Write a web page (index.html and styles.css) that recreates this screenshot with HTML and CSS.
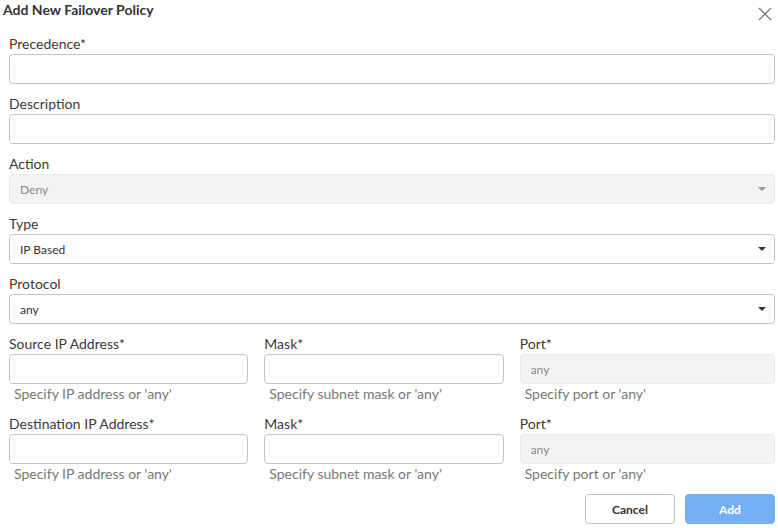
FILE: index.html
```html
<!DOCTYPE html>
<html>
<head>
<meta charset="utf-8">
<link rel="stylesheet" href="styles.css">
</head>
<body>
<div class="modal">
  <div class="header">
    <div class="title">Add New Failover Policy</div>
    <svg class="close" width="14" height="14" viewBox="0 0 14 14"><path d="M1 1L13 13M13 1L1 13" stroke="#7a7a7a" stroke-width="1.3" fill="none"/></svg>
  </div>
  <div class="body">
    <div class="field">
      <div class="label">Precedence*</div>
      <div class="input"></div>
    </div>
    <div class="field">
      <div class="label">Description</div>
      <div class="input"></div>
    </div>
    <div class="field">
      <div class="label">Action</div>
      <div class="input select disabled"><span>Deny</span><span class="caret"></span></div>
    </div>
    <div class="field">
      <div class="label">Type</div>
      <div class="input select"><span>IP Based</span><span class="caret"></span></div>
    </div>
    <div class="field">
      <div class="label">Protocol</div>
      <div class="input select"><span>any</span><span class="caret"></span></div>
    </div>
    <div class="row">
      <div class="col">
        <div class="label">Source IP Address*</div>
        <div class="input"></div>
        <div class="help">Specify IP address or 'any'</div>
      </div>
      <div class="col">
        <div class="label">Mask*</div>
        <div class="input"></div>
        <div class="help">Specify subnet mask or 'any'</div>
      </div>
      <div class="col">
        <div class="label">Port*</div>
        <div class="input disabled"><span>any</span></div>
        <div class="help">Specify port or 'any'</div>
      </div>
    </div>
    <div class="row">
      <div class="col">
        <div class="label">Destination IP Address*</div>
        <div class="input"></div>
        <div class="help">Specify IP address or 'any'</div>
      </div>
      <div class="col">
        <div class="label">Mask*</div>
        <div class="input"></div>
        <div class="help">Specify subnet mask or 'any'</div>
      </div>
      <div class="col">
        <div class="label">Port*</div>
        <div class="input disabled"><span>any</span></div>
        <div class="help">Specify port or 'any'</div>
      </div>
    </div>
    <div class="footer">
      <button class="btn cancel">Cancel</button>
      <button class="btn add">Add</button>
    </div>
  </div>
</div>
</body>
</html>
```

FILE: styles.css
```css
html, body {
  margin: 0;
  padding: 0;
  background: #fff;
}
body {
  font-family: Lato, "Liberation Sans", sans-serif;
  color: #333;
  width: 778px;
  height: 528px;
  overflow: hidden;
}
.header {
  height: 34px;
  display: flex;
  justify-content: space-between;
  align-items: flex-start;
  padding: 0 6px 0 3px;
}
.title {
  font-weight: bold;
  font-size: 14px;
  line-height: 19px;
  color: #333;
}
.close {
  margin-top: 7px;
}
.body {
  padding: 0 3px 0 9px;
}
.field {
  margin-bottom: 10px;
}
.label {
  font-size: 14px;
  line-height: 19px;
  height: 20px;
  color: #3a3a3a;
}
.input {
  box-sizing: border-box;
  height: 30px;
  border: 1px solid #c4c4c4;
  border-radius: 4px;
  background: #fff;
  display: flex;
  align-items: center;
  padding: 0 10px;
  font-size: 12px;
  color: #333;
}
.input.disabled {
  background: #f2f3f4;
  border-color: #e8e9ea;
  color: #8a8a8a;
}
.select {
  justify-content: space-between;
}
.caret {
  width: 0;
  height: 0;
  border-left: 4px solid transparent;
  border-right: 4px solid transparent;
  border-top: 4px solid #333;
  margin-right: -2px;
}
.disabled .caret {
  border-top-color: #999;
}
.row {
  display: grid;
  grid-template-columns: 1fr 1fr 1fr;
  margin-bottom: 10px;
}
.col {
  padding-right: 16px;
}
.col:last-child {
  padding-right: 0;
}
.help {
  font-size: 14px;
  line-height: 20px;
  color: #777;
  padding-left: 5px;
}
.footer {
  display: flex;
  justify-content: flex-end;
  gap: 10px;
}
.btn {
  width: 90px;
  height: 30px;
  border-radius: 4px;
  font-family: Lato, "Liberation Sans", sans-serif;
  font-size: 12px;
  font-weight: bold;
  cursor: pointer;
}
.cancel {
  background: #fff;
  border: 1px solid #bdbdbd;
  color: #333;
}
.add {
  background: #74aef3;
  border: 1px solid #74aef3;
  color: #fff;
}
```
